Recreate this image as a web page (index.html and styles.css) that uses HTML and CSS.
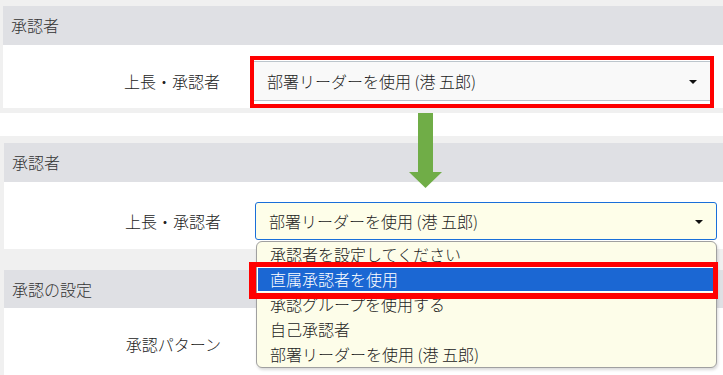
FILE: index.html
```
<!DOCTYPE html>
<html lang="ja">
<head>
  <meta charset="UTF-8" />
  <title>承認者の設定</title>
  <link rel="stylesheet" href="styles.css">
</head>
<body>

  <div class="page">
    <!-- before -->
    <div class="shot shot-top">
      <section class="panel">
        <div class="panel-head">承認者</div>
        <div class="panel-body body-top">
          <div class="row">
            <label>上長・承認者</label>
            <div class="select select-plain">部署リーダーを使用 (港 五郎)<span class="caret"></span></div>
          </div>
        </div>
      </section>
    </div>

    <div class="band"></div>

    <!-- after -->
    <div class="shot shot-bottom">
      <section class="panel">
        <div class="panel-head">承認者</div>
        <div class="panel-body body-mid">
          <div class="row">
            <label>上長・承認者</label>
            <div class="select select-focus">部署リーダーを使用 (港 五郎)<span class="caret"></span></div>
          </div>
        </div>
      </section>

      <section class="panel panel-last">
        <div class="panel-head head-short">承認の設定</div>
        <div class="panel-body body-last">
          <div class="row">
            <label>承認パターン</label>
            <div></div>
          </div>
        </div>
      </section>
    </div>

    <!-- overlays -->
    <ul class="dropdown">
      <li>承認者を設定してください</li>
      <li class="active">直属承認者を使用</li>
      <li>承認グループを使用する</li>
      <li>自己承認者</li>
      <li>部署リーダーを使用 (港 五郎)</li>
    </ul>

    <div class="mark mark-select"></div>
    <div class="mark mark-option"></div>

    <svg class="arrow" width="33" height="75" viewBox="0 0 33 75">
      <polygon points="9,0 24,0 24,59 33,59 16.5,75 0,59 9,59" fill="#70ad47" />
    </svg>
  </div>

</body>
</html>
```

FILE: styles.css
```
body {
  margin: 0;
  background: #f0f0f0;
  font-family: "Noto Sans CJK JP", "Noto Sans", sans-serif;
  font-size: 16px;
  font-weight: 300;
  color: #222;
}
.page {
  position: relative;
  width: 723px;
  height: 375px;
  overflow: hidden;
}
.shot {
  background: #f0f0f0;
}
.shot-top {
  padding: 6px 0 5px 3px;
}
.shot-bottom {
  padding: 7px 0 0 4px;
}
.band {
  height: 23px;
  background: #fff;
}
.panel {
  background: #fff;
}
.panel-last {
  margin-top: 21px;
}
.panel-head {
  height: 39px;
  line-height: 39px;
  padding-left: 8px;
  background: #dfe0e4;
  color: #333;
}
.head-short {
  height: 38px;
  line-height: 38px;
}
.panel-body {
  box-sizing: border-box;
}
.body-top {
  height: 63px;
  padding: 16px 13px 0 0;
}
.body-mid {
  height: 67px;
  padding: 20px 6px 0 0;
}
.body-last {
  height: 80px;
  padding: 17px 6px 0 0;
}
.row {
  display: grid;
  grid-template-columns: 217px 1fr;
  column-gap: 34px;
  align-items: center;
}
.row label {
  text-align: right;
  color: #222;
  line-height: 38px;
}
.select {
  position: relative;
  box-sizing: border-box;
  padding-left: 13px;
  color: #222;
}
.select-plain {
  height: 40px;
  line-height: 38px;
  background: #f9f9f9;
  border-top: 1px solid #bcc5cc;
  border-bottom: 1px solid #bcc5cc;
}
.select-focus {
  height: 38px;
  line-height: 36px;
  background: #fefee9;
  border: 1px solid #1a6fd9;
  border-radius: 3px;
}
.caret {
  position: absolute;
  right: 13px;
  top: 50%;
  margin-top: -1px;
  width: 0;
  height: 0;
  border-left: 4px solid transparent;
  border-right: 4px solid transparent;
  border-top: 4px solid #111;
}
.dropdown {
  position: absolute;
  left: 256px;
  top: 241px;
  width: 461px;
  box-sizing: border-box;
  margin: 0;
  padding: 0;
  list-style: none;
  background: #fdfde9;
  border: 1px solid #a0a0a0;
  border-radius: 6px;
  box-shadow: 1px 2px 3px rgba(0, 0, 0, 0.15);
}
.dropdown li {
  height: 25px;
  line-height: 25px;
  padding-left: 13px;
  color: #222;
}
.dropdown li.active {
  background: #1b67d3;
  color: #fff;
  box-shadow: inset 0 0 0 1px #fff;
}
.mark {
  position: absolute;
  box-sizing: border-box;
  border: 4px solid #ff0000;
}
.mark-select {
  left: 250px;
  top: 56px;
  width: 464px;
  height: 52px;
}
.mark-option {
  left: 249px;
  top: 262px;
  width: 469px;
  height: 37px;
  border-width: 5px 5px 6px 7px;
}
.arrow {
  position: absolute;
  left: 409px;
  top: 113px;
}
```
